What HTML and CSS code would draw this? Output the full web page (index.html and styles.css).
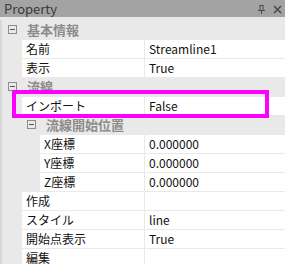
FILE: index.html
```html
<html>
  <head>
    <title>Property</title>
    <link rel="stylesheet" href="styles.css">
  </head>
  <body>
    <div class="panel">
      <!-- タイトルバー -->
      <div class="titlebar">
        <span class="title">Property</span>
        <span class="tools">
          <svg width="9" height="9" viewBox="0 0 9 9">
            <path d="M2.5 0.5h4M3 0.5v5M6 0.5v5M1 5.5h7M4.5 5.5v3.5" stroke="#4a4a4a" stroke-width="1" fill="none"/>
          </svg>
          <svg width="9" height="9" viewBox="0 0 9 9">
            <path d="M1 1l7 7M8 1l-7 7" stroke="#4a4a4a" stroke-width="1.6" fill="none"/>
          </svg>
        </span>
      </div>

      <div class="grid">
        <div class="cat"><span class="toggle"></span>基本情報</div>
        <div class="row"><div class="name">名前</div><div class="value">Streamline1</div></div>
        <div class="row"><div class="name">表示</div><div class="value">True</div></div>

        <div class="cat"><span class="toggle"></span>流線</div>
        <div class="row"><div class="name">インポート</div><div class="value">False</div></div>
        <div class="cat sub"><span class="toggle"></span>流線開始位置</div>
        <div class="row deep"><div class="name">X座標</div><div class="value">0.000000</div></div>
        <div class="row deep"><div class="name">Y座標</div><div class="value">0.000000</div></div>
        <div class="row deep"><div class="name">Z座標</div><div class="value">0.000000</div></div>
        <div class="row"><div class="name">作成</div><div class="value"></div></div>
        <div class="row"><div class="name">スタイル</div><div class="value">line</div></div>
        <div class="row"><div class="name">開始点表示</div><div class="value">True</div></div>
        <div class="row"><div class="name">編集</div><div class="value"></div></div>
      </div>

      <!-- 強調枠 -->
      <div class="highlight"></div>
    </div>
  </body>
</html>
```

FILE: styles.css
```css
body {
  margin: 0;
  background: #e9e9e9;
  font-family: "Noto Sans CJK JP", "Noto Sans", sans-serif;
  font-size: 12px;
}

.panel {
  position: relative;
  width: 285px;
  height: 264px;
  overflow: hidden;
  background: #e9e9e9;
}

.titlebar {
  display: flex;
  align-items: center;
  justify-content: space-between;
  height: 17px;
  padding: 0 3px 0 4px;
  background: #a3a3a3;
  color: #3a3a3a;
  font-size: 13px;
}

.title {
  line-height: 17px;
}

.tools {
  display: flex;
  gap: 7px;
  padding-top: 1px;
}

.grid {
  margin-top: 3px;
  border-left: 2px solid #d6d6d6;
}

.cat {
  display: flex;
  align-items: center;
  height: 19px;
  padding-left: 6px;
  color: #8c8c8c;
  font-weight: bold;
  font-size: 13px;
}

.cat.sub {
  padding-left: 25px;
}

.toggle {
  position: relative;
  width: 7px;
  height: 7px;
  border: 1px solid #8c8c8c;
  margin-right: 10px;
  box-sizing: content-box;
}

.toggle::after {
  content: "";
  position: absolute;
  left: 1px;
  top: 3px;
  width: 5px;
  height: 1px;
  background: #555;
}

.row {
  display: flex;
  height: 18px;
  border-top: 1px solid #e9e9e9;
  padding-left: 20px;
  color: #111;
  line-height: 18px;
}

.row.deep {
  padding-left: 38px;
}

.name {
  width: 118px;
  flex-shrink: 0;
  padding-left: 4px;
  background: #fff;
  border-right: 1px solid #e9e9e9;
}

.row.deep .name {
  width: 100px;
}

.value {
  flex: 1;
  padding-left: 4px;
  background: #fff;
}

.highlight {
  position: absolute;
  left: 12px;
  top: 90px;
  width: 249px;
  height: 20px;
  border: 4px solid #ff00ff;
}
```
